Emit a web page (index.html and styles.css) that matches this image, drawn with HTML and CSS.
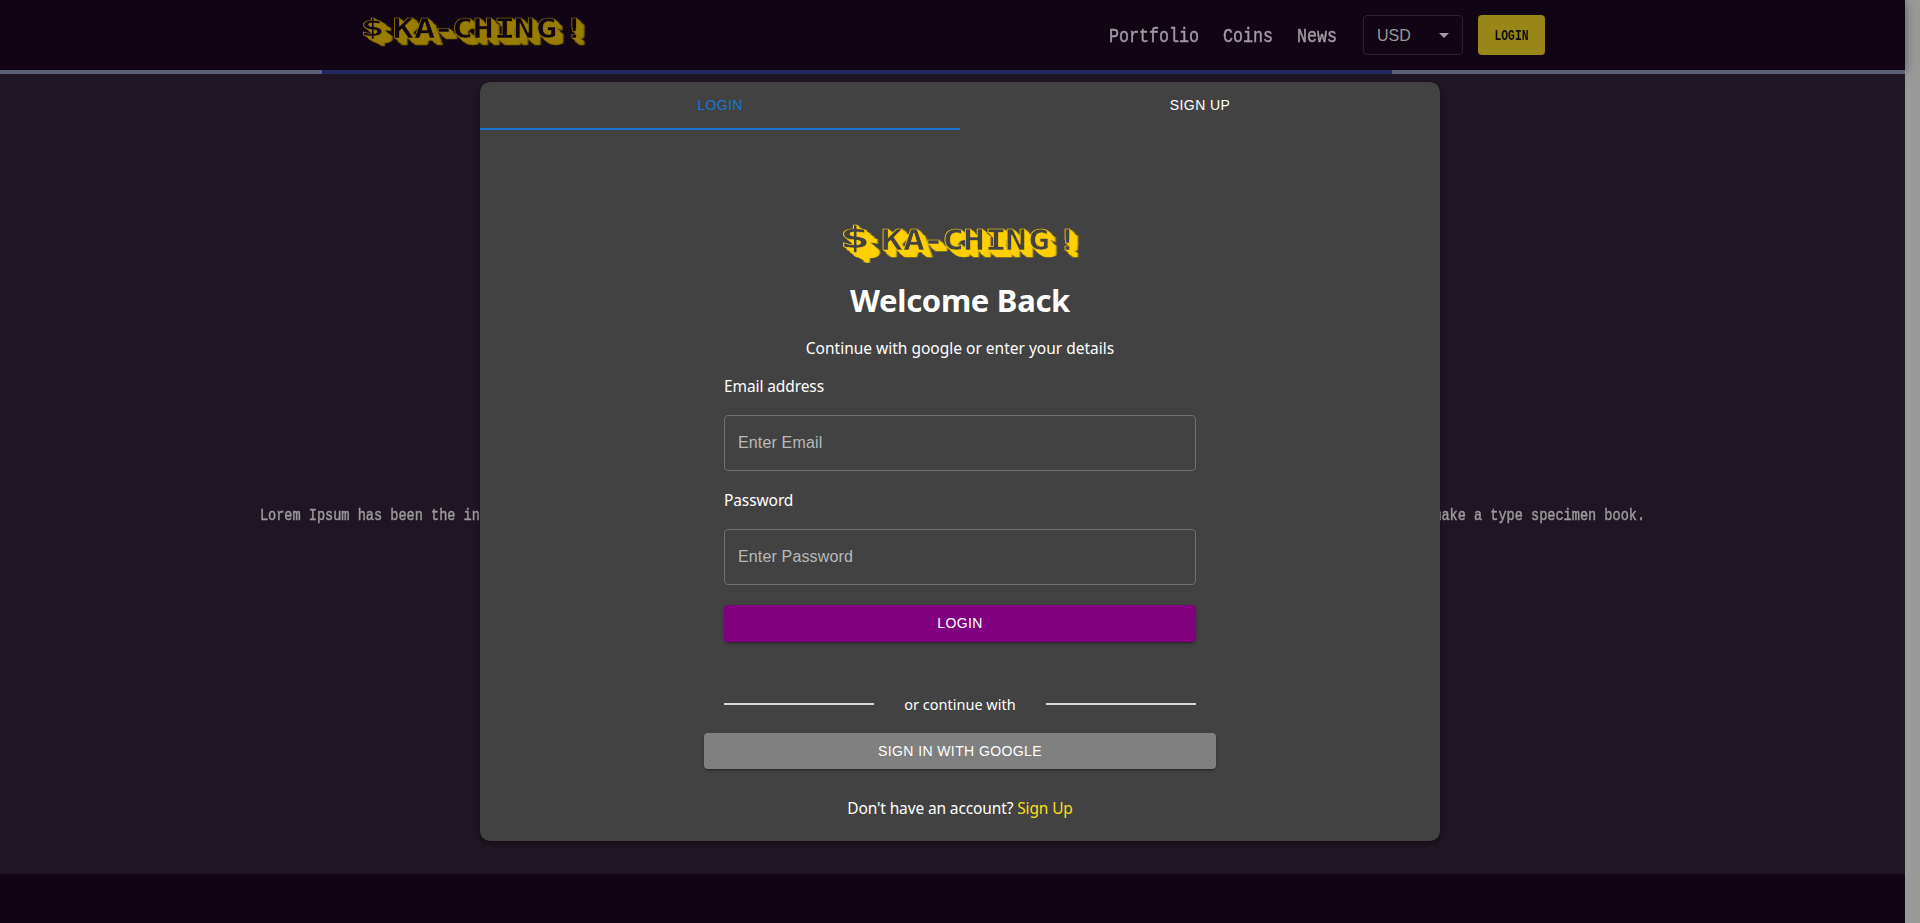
FILE: index.html
```html
<!DOCTYPE html>
<html lang="en">
<head>
<meta charset="utf-8">
<title>Ka-Ching!</title>
<link rel="stylesheet" href="styles.css">
</head>
<body>
<div class="page">
  <header class="header">
    <svg class="logo logo-nav" viewBox="0 0 240 40">
      <text class="coin" transform="scale(1.75 1)" x="11.7" y="25">$</text>
      <text class="word" transform="scale(1.3 1)" x="40 57 71.9 87 103.1 120 135.4 153 175" y="27">KA-CHING!</text>
    </svg>
    <nav class="nav">
      <a class="nav-link">Portfolio</a>
      <a class="nav-link">Coins</a>
      <a class="nav-link">News</a>
    </nav>
    <div class="select">USD<svg class="arrow" viewBox="0 0 10 5"><path d="M0 0h10L5 5z"/></svg></div>
    <button class="nav-login"><span>LOGIN</span></button>
  </header>
  <div class="progress"><div class="progress-bar"></div></div>
  <main class="main"><p class="lorem">Lorem Ipsum has been the industry's standard dummy text ever since the 1500s, when an unknown printer took a galley of type and scrambled it to make a type specimen book.</p></main>
  <footer class="footer"></footer>
</div>
<div class="gutter"></div>
<section class="modal">
  <div class="tabs"><div class="tab active">LOGIN</div><div class="tab">SIGN UP</div></div>
  <svg class="logo logo-modal" viewBox="0 0 240 40">
    <text class="coin" transform="scale(1.75 1)" x="8.6" y="25">$</text>
    <text class="word" transform="scale(1.3 1)" x="40 57 71.9 87 103.1 120 135.4 153 175" y="27">KA-CHING!</text>
  </svg>
  <h1 class="title">Welcome Back</h1>
  <p class="subtitle">Continue with google or enter your details</p>
  <form class="form">
    <label class="label">Email address</label>
    <input class="input" type="email" placeholder="Enter Email">
    <label class="label label-second">Password</label>
    <input class="input" type="password" placeholder="Enter Password">
    <button class="button submit" type="button">LOGIN</button>
  </form>
  <div class="divider"><span class="line"></span><span class="or">or continue with</span><span class="line"></span></div>
  <button class="button google" type="button">SIGN IN WITH GOOGLE</button>
  <p class="account">Don't have an account? <a class="signup">Sign Up</a></p>
</section>
</body>
</html>
```
FILE: styles.css
```css
* { box-sizing: border-box; }
body {
  margin: 0;
  height: 923px;
  display: flex;
  overflow: hidden;
  font-family: "Noto Sans", sans-serif;
}
.page { width: 1905px; display: flex; flex-direction: column; position: relative; z-index: 1; }
.gutter { flex: 1; background: #999; }
.header {
  height: 70px;
  display: flex;
  align-items: center;
  padding: 0 360px 0 352px;
  background: #110414;
  box-shadow: 0 2px 10px rgba(0, 0, 0, .4);
}
.logo {
  --gold: #ffd000;
  --face: #424242;
  display: block;
  overflow: visible;
  font-family: "DejaVu Sans Mono", monospace;
  font-weight: bold;
  text-anchor: middle;
  fill: var(--face);
  stroke: var(--gold);
  stroke-width: .6px;
}
.word {
  font-size: 28px;
  filter: drop-shadow(1px 1px 0 var(--gold)) drop-shadow(2px 2px 0 var(--gold)) drop-shadow(3px 4px 0 var(--gold));
}
.coin {
  font-size: 30px;
  filter: drop-shadow(1px 1px 0 var(--gold)) drop-shadow(2px 3px 0 var(--gold)) drop-shadow(4px 6px 0 var(--gold));
}
.logo-nav { width: 235px; height: 39px; margin-top: -7px; --gold: #997d00; --face: #110414; }
.logo-nav .coin {
  font-size: 24px;
  filter: drop-shadow(1px 1px 0 var(--gold)) drop-shadow(2px 2px 0 var(--gold)) drop-shadow(3px 4px 0 var(--gold));
}
.nav { display: flex; margin-left: auto; gap: 24px; margin-right: 26px; padding-top: 3px; }
.nav-link {
  font: 16.67px "Liberation Mono", monospace;
  color: #a09ba1;
  -webkit-text-stroke: .4px #a09ba1;
  transform: scaleY(1.2);
}
.select {
  width: 100px;
  height: 40px;
  border: 1px solid #2c222f;
  border-radius: 4px;
  display: flex;
  align-items: center;
  justify-content: space-between;
  padding: 1px 13px 0;
  font: 16px "Liberation Sans", sans-serif;
  color: #999;
  margin-right: 15px;
}
.arrow { width: 10px; height: 5px; fill: #a09ba1; }
.nav-login {
  width: 67px;
  height: 40px;
  border: 0;
  border-radius: 4px;
  background: #998618;
  color: #110c02;
  font: bold 11.4px "Liberation Mono", monospace;
  padding: 2px 0 0;
}
.nav-login span { display: block; transform: scaleY(1.3); }
.progress { height: 4px; background: #5c6075; padding-left: 322px; }
.progress-bar { height: 4px; width: 1070px; background: #202860; }
.main {
  height: 800px;
  background: #201523;
  display: flex;
  align-items: center;
  justify-content: center;
}
.lorem {
  margin: 82px 0 0;
  white-space: nowrap;
  font: 13.58px "Liberation Mono", monospace;
  color: #999;
  -webkit-text-stroke: .4px #999;
  transform: scaleY(1.18);
}
.footer { flex: 1; background: #110414; }
.modal {
  position: absolute;
  z-index: 2;
  left: 480px;
  top: 82px;
  width: 960px;
  height: 759px;
  background: #424242;
  border-radius: 10px;
  overflow: hidden;
  color: #fff;
  display: flex;
  flex-direction: column;
  align-items: center;
  box-shadow: 0 3px 5px rgba(0, 0, 0, .3);
}
.tabs { display: flex; width: 100%; height: 48px; }
.tab {
  flex: 1;
  height: 48px;
  padding-top: 15px;
  text-align: center;
  font: 14px "Liberation Sans", sans-serif;
  letter-spacing: .4px;
}
.tab.active { color: #1976d2; border-bottom: 2px solid #1976d2; }
.logo-modal { width: 240px; height: 40px; margin-top: 93px; }
.title { margin: 13px 0 0; font-size: 31px; line-height: 48px; letter-spacing: -.3px; }
.subtitle { margin: 12px 0 0; font-size: 15.5px; line-height: 24px; letter-spacing: 0; }
.form { width: 472px; display: flex; flex-direction: column; }
.label { margin: 14px 0 17px; font-size: 15.5px; line-height: 24px; letter-spacing: -.1px; }
.label-second { margin-top: 17px; }
.input {
  height: 56px;
  padding: 0 13px;
  border: 1px solid #717171;
  border-radius: 4px;
  background: transparent;
  font: 16px "Liberation Sans", sans-serif;
  letter-spacing: .15px;
}
.input::placeholder { color: #b9b9b9; opacity: 1; }
.button {
  border: 0;
  border-radius: 4px;
  color: #fff;
  font: 14px "Liberation Sans", sans-serif;
  letter-spacing: .4px;
  box-shadow: 0 3px 1px -2px rgba(0, 0, 0, .2), 0 2px 2px rgba(0, 0, 0, .14), 0 1px 5px rgba(0, 0, 0, .12);
}
.submit { height: 37px; margin-top: 20px; padding-bottom: 2px; background: #800080; }
.divider { width: 472px; margin-top: 50px; display: flex; align-items: center; justify-content: space-between; }
.line { width: 150px; height: 2px; background: #d8d8d8; }
.or { font-size: 14.5px; line-height: 24px; letter-spacing: 0; }
.google { width: 512px; height: 36px; margin-top: 17px; background: gray; }
.account { margin: 27px 0 0; font-size: 15.5px; line-height: 24px; letter-spacing: -.13px; }
.signup { color: #f8df1c; }
```
